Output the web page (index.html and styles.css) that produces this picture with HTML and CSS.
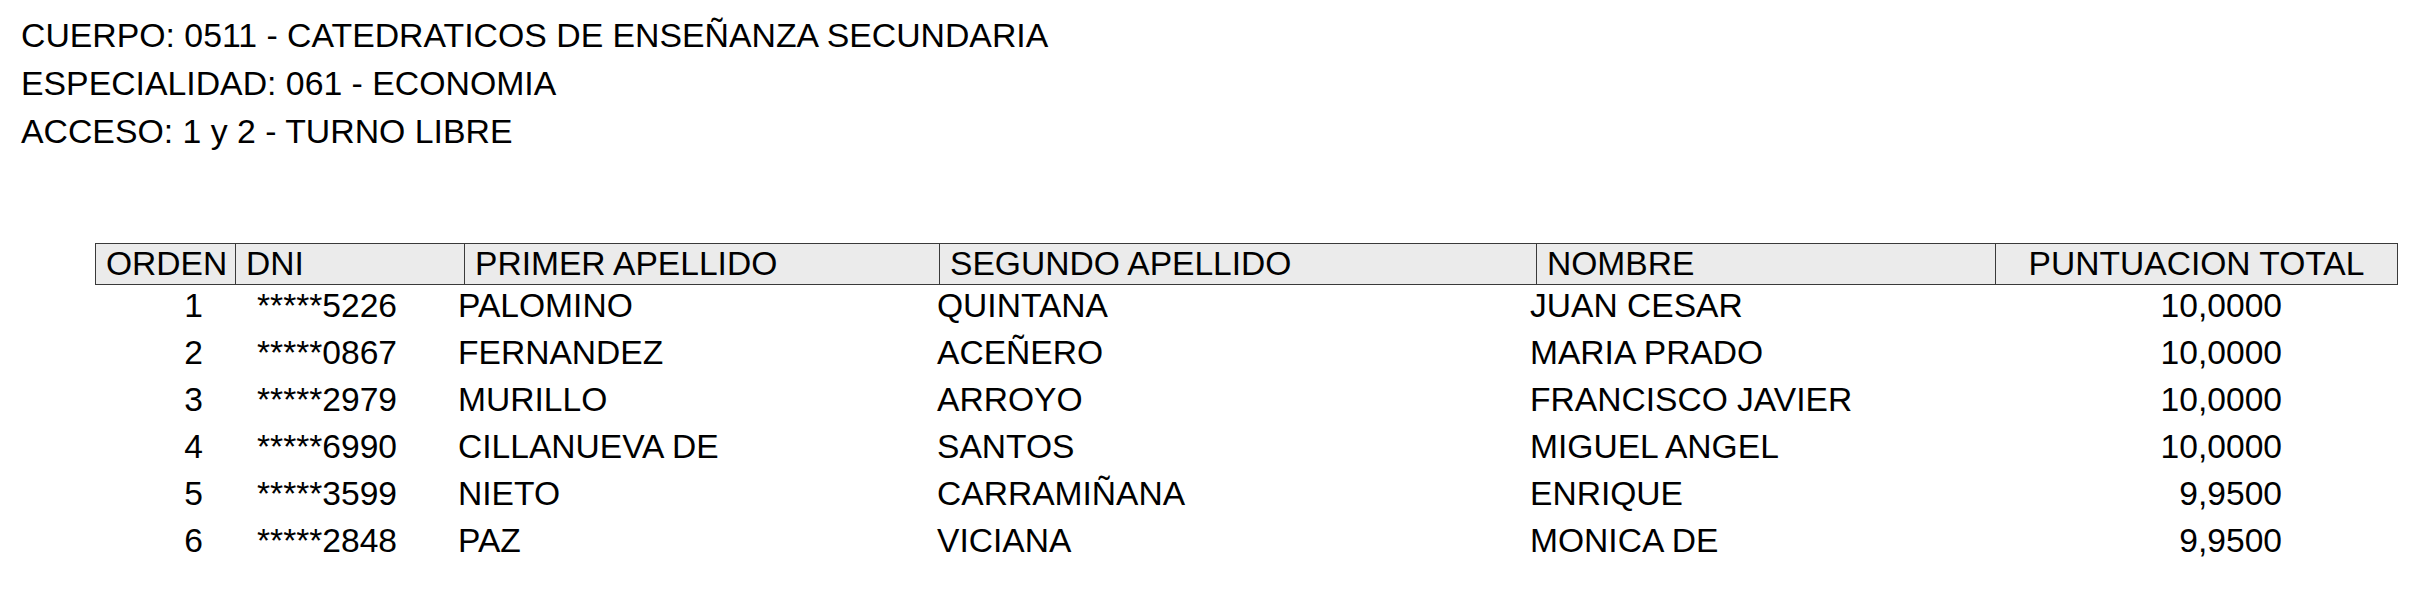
FILE: index.html
```html
<!DOCTYPE html>
<html lang="es">
<head>
<meta charset="utf-8">
<title>Listado</title>
<link rel="stylesheet" href="styles.css">
</head>
<body>
<div class="info">
  <div class="info-line">CUERPO: 0511 - CATEDRATICOS DE ENSEÑANZA SECUNDARIA</div>
  <div class="info-line">ESPECIALIDAD: 061 - ECONOMIA</div>
  <div class="info-line">ACCESO: 1 y 2 - TURNO LIBRE</div>
</div>
<div class="table">
  <div class="thead">
    <div class="th">ORDEN</div>
    <div class="th">DNI</div>
    <div class="th">PRIMER APELLIDO</div>
    <div class="th">SEGUNDO APELLIDO</div>
    <div class="th">NOMBRE</div>
    <div class="th th-center">PUNTUACION TOTAL</div>
  </div>
  <div class="tbody">
    <div class="tr"><div class="td num">1</div><div class="td dni">*****5226</div><div class="td">PALOMINO</div><div class="td">QUINTANA</div><div class="td">JUAN CESAR</div><div class="td num">10,0000</div></div>
    <div class="tr"><div class="td num">2</div><div class="td dni">*****0867</div><div class="td">FERNANDEZ</div><div class="td">ACEÑERO</div><div class="td">MARIA PRADO</div><div class="td num">10,0000</div></div>
    <div class="tr"><div class="td num">3</div><div class="td dni">*****2979</div><div class="td">MURILLO</div><div class="td">ARROYO</div><div class="td">FRANCISCO JAVIER</div><div class="td num">10,0000</div></div>
    <div class="tr"><div class="td num">4</div><div class="td dni">*****6990</div><div class="td">CILLANUEVA DE</div><div class="td">SANTOS</div><div class="td">MIGUEL ANGEL</div><div class="td num">10,0000</div></div>
    <div class="tr"><div class="td num">5</div><div class="td dni">*****3599</div><div class="td">NIETO</div><div class="td">CARRAMIÑANA</div><div class="td">ENRIQUE</div><div class="td num">9,9500</div></div>
    <div class="tr"><div class="td num">6</div><div class="td dni">*****2848</div><div class="td">PAZ</div><div class="td">VICIANA</div><div class="td">MONICA DE</div><div class="td num">9,9500</div></div>
  </div>
</div>
</body>
</html>
```
FILE: styles.css
```css
html, body {
  margin: 0;
  padding: 0;
  background: #ffffff;
}
body {
  font-family: "Liberation Sans", Arial, sans-serif;
  font-size: 33.6px;
  color: #000000;
  width: 2420px;
  height: 592px;
  overflow: hidden;
}
.info {
  padding: 11px 0 0 21px;
  font-size: 33.8px;
}
.info-line {
  line-height: 48px;
  height: 48px;
  white-space: nowrap;
}
.table {
  margin: 88px 0 0 95px;
  width: 2303px;
}
.thead {
  display: grid;
  grid-template-columns: 139px 229px 475px 597px 459px 1fr;
  border: 1px solid #3a3a3a;
  background: #ebebeb;
  height: 40px;
}
.th {
  line-height: 40px;
  padding-left: 10px;
  white-space: nowrap;
  border-left: 1px solid #3a3a3a;
}
.th:first-child {
  border-left: none;
}
.th-center {
  text-align: center;
  padding-left: 0;
}
.tbody {
  margin-top: -3px;
}
.tr {
  display: grid;
  grid-template-columns: 108px 255px 479px 593px 1fr 381px;
  padding-right: 116px;
  height: 47px;
}
.td {
  line-height: 47px;
  white-space: nowrap;
}
.td.num {
  text-align: right;
}
.td.dni {
  padding-left: 54px;
}
```
